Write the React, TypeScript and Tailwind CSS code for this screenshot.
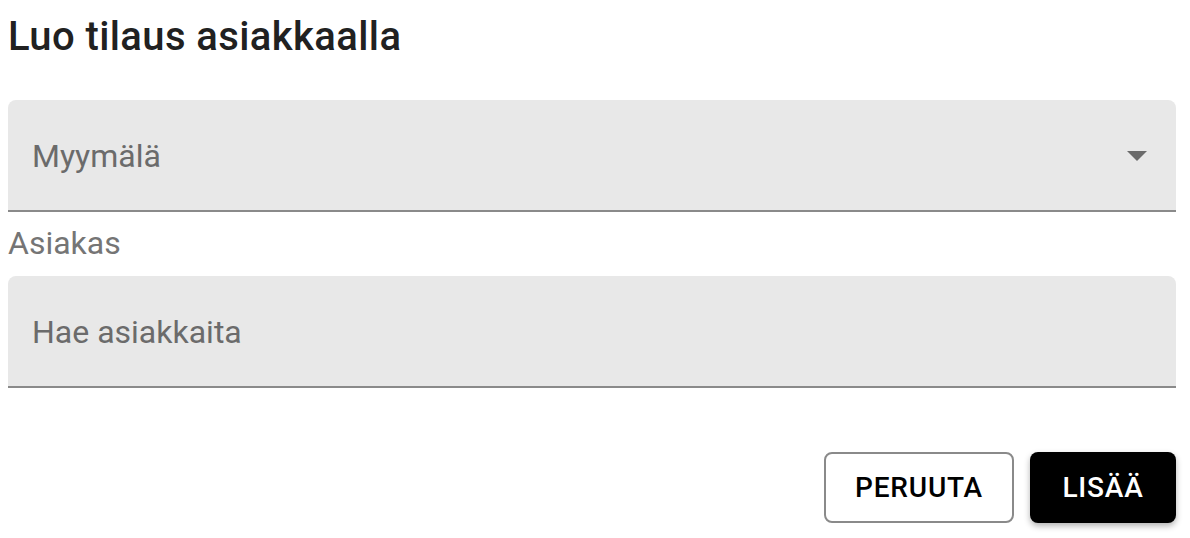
import React from "react";

const ArrowDrop: React.FC = () => (
  <svg viewBox="0 0 24 24" className="w-12 h-12 fill-[#6b6b6b]" aria-hidden="true">
    <path d="M7 10l5 5 5-5z" />
  </svg>
);

export default function App() {
  return (
    <main
      className="w-[1190px] h-[538px] bg-white pl-2 pt-[13px]"
      style={{ fontFamily: "Roboto, 'Liberation Sans', sans-serif" }}
    >
      <div className="w-[1168px]">
        <h1 className="text-[40px] leading-[48px] font-medium tracking-[0.4px] text-[#212121]">Luo tilaus asiakkaalla</h1>

        <div className="mt-[39px] h-[112px] bg-[#e8e8e8] rounded-t-lg border-b-2 border-[#8a8a8a] flex items-center justify-between pl-[24px] pr-[15px]">
          <span className="text-[32px] leading-none text-[#6b6b6b] pt-[2px]">Myymälä</span>
          <ArrowDrop />
        </div>

        <label className="block mt-[11px] text-[32px] leading-[40px] text-[#757575]">Asiakas</label>

        <div className="mt-[13px] h-[112px] bg-[#e8e8e8] rounded-t-lg border-b-2 border-[#8a8a8a] flex items-center pl-[24px]">
          <span className="text-[32px] leading-none text-[#6b6b6b] pt-[2px]">Hae asiakkaita</span>
        </div>

        <div className="mt-[64px] flex justify-end gap-4">
          <button className="h-[71px] w-[190px] rounded-lg border-2 border-[#8a8a8a] bg-white text-[28px] font-medium tracking-[0.8px] text-black">
            PERUUTA
          </button>
          <button className="h-[71px] w-[146px] rounded-lg bg-black text-[28px] font-medium tracking-[0.8px] text-white shadow-[0_3px_6px_rgba(0,0,0,0.3)]">
            LISÄÄ
          </button>
        </div>
      </div>
    </main>
  );
}
